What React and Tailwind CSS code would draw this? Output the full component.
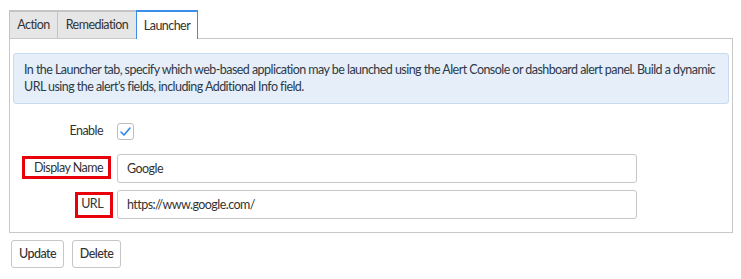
import React, { useState } from "react";

const tabs = ["Action", "Remediation", "Launcher"];
const tabWidths = { Action: "w-[48px]", Remediation: "w-[79px]", Launcher: "w-[62px]" };

const App = () => {
  const [active, setActive] = useState("Launcher");
  const [enabled, setEnabled] = useState(true);
  const [name, setName] = useState("Google");
  const [url, setUrl] = useState("https://www.google.com/");

  return (
    <div className="min-h-screen bg-white pl-[9px] pt-[10px] text-[12.5px] tracking-[-0.55px] text-[#333] font-['Lato',sans-serif]">
      {/* tabs */}
      <div className="flex h-[28px]">
        {tabs.map((t) =>
          t === active ? (
            <button
              key={t}
              onClick={() => setActive(t)}
              className={`${tabWidths[t]} h-[29px] bg-white border-x border-t-2 border-[#3d8ee6] text-center leading-[24px] relative z-10`}
            >
              {t}
            </button>
          ) : (
            <button
              key={t}
              onClick={() => setActive(t)}
              className={`${tabWidths[t]} h-[28px] bg-[#e6e6e6] border-l border-t-2 border-[#c4c4c4] text-center leading-[24px]`}
            >
              {t}
            </button>
          )
        )}
      </div>

      {/* panel */}
      <div className="w-[724px] h-[195px] border border-[#c8c8c8] px-[3px] pt-[14px]">
        <div className="h-[51px] rounded-[3px] border border-[#c9dbf0] bg-[#e5eef9] pl-[10px] pr-[4px] pt-[7px] leading-[17px] text-[#2e3a47]">
          In the Launcher tab, specify which web-based application may be launched using the Alert Console or dashboard alert panel. Build a dynamic URL using the alert's fields, including Additional Info field.
        </div>

        <div className="mt-[18px] flex items-center">
          <div className="w-[93px] -ml-[3px] text-right">Enable</div>
          <button
            onClick={() => setEnabled(!enabled)}
            className="ml-[14px] w-[17px] h-[17px] rounded-[3px] border border-[#bdbdbd] bg-white flex items-center justify-center"
          >
            {enabled && (
              <svg width="13" height="13" viewBox="0 0 13 13">
                <path d="M2 7l3 3 6-7" fill="none" stroke="#2e86e6" strokeWidth="1.6" strokeLinecap="round" strokeLinejoin="round" />
              </svg>
            )}
          </button>
        </div>

        <div className="mt-[13px] flex items-center">
          <div className="w-[93px] -ml-[3px] text-right">
            <span className="relative leading-[17px]">
              Display Name
              <span className="absolute -left-[12px] -right-[8px] -top-[4px] -bottom-[4px] border-[3px] border-[#e8000b]"></span>
            </span>
          </div>
          <input
            value={name}
            onChange={(e) => setName(e.target.value)}
            className="ml-[14px] w-[520px] h-[29px] rounded-[3px] border border-[#c6c6c6] px-[9px] text-[#333] outline-none"
          />
        </div>

        <div className="mt-[7px] flex items-center">
          <div className="w-[93px] -ml-[3px] text-right">
            <span className="relative leading-[17px]">
              URL
              <span className="absolute -left-[6px] -right-[10px] -top-[4px] -bottom-[7px] border-[3px] border-[#e8000b]"></span>
            </span>
          </div>
          <input
            value={url}
            onChange={(e) => setUrl(e.target.value)}
            className="ml-[14px] w-[520px] h-[29px] rounded-[3px] border border-[#c6c6c6] px-[9px] text-[#333] outline-none"
          />
        </div>
      </div>

      {/* actions */}
      <div className="mt-[7px] ml-[2px] flex gap-[8px]">
        <button className="w-[53px] h-[28px] rounded-[3px] border border-[#c6c6c6] bg-white text-[#333] font-medium">Update</button>
        <button className="w-[49px] h-[28px] rounded-[3px] border border-[#c6c6c6] bg-white text-[#333] font-medium">Delete</button>
      </div>
    </div>
  );
};

export default App;
